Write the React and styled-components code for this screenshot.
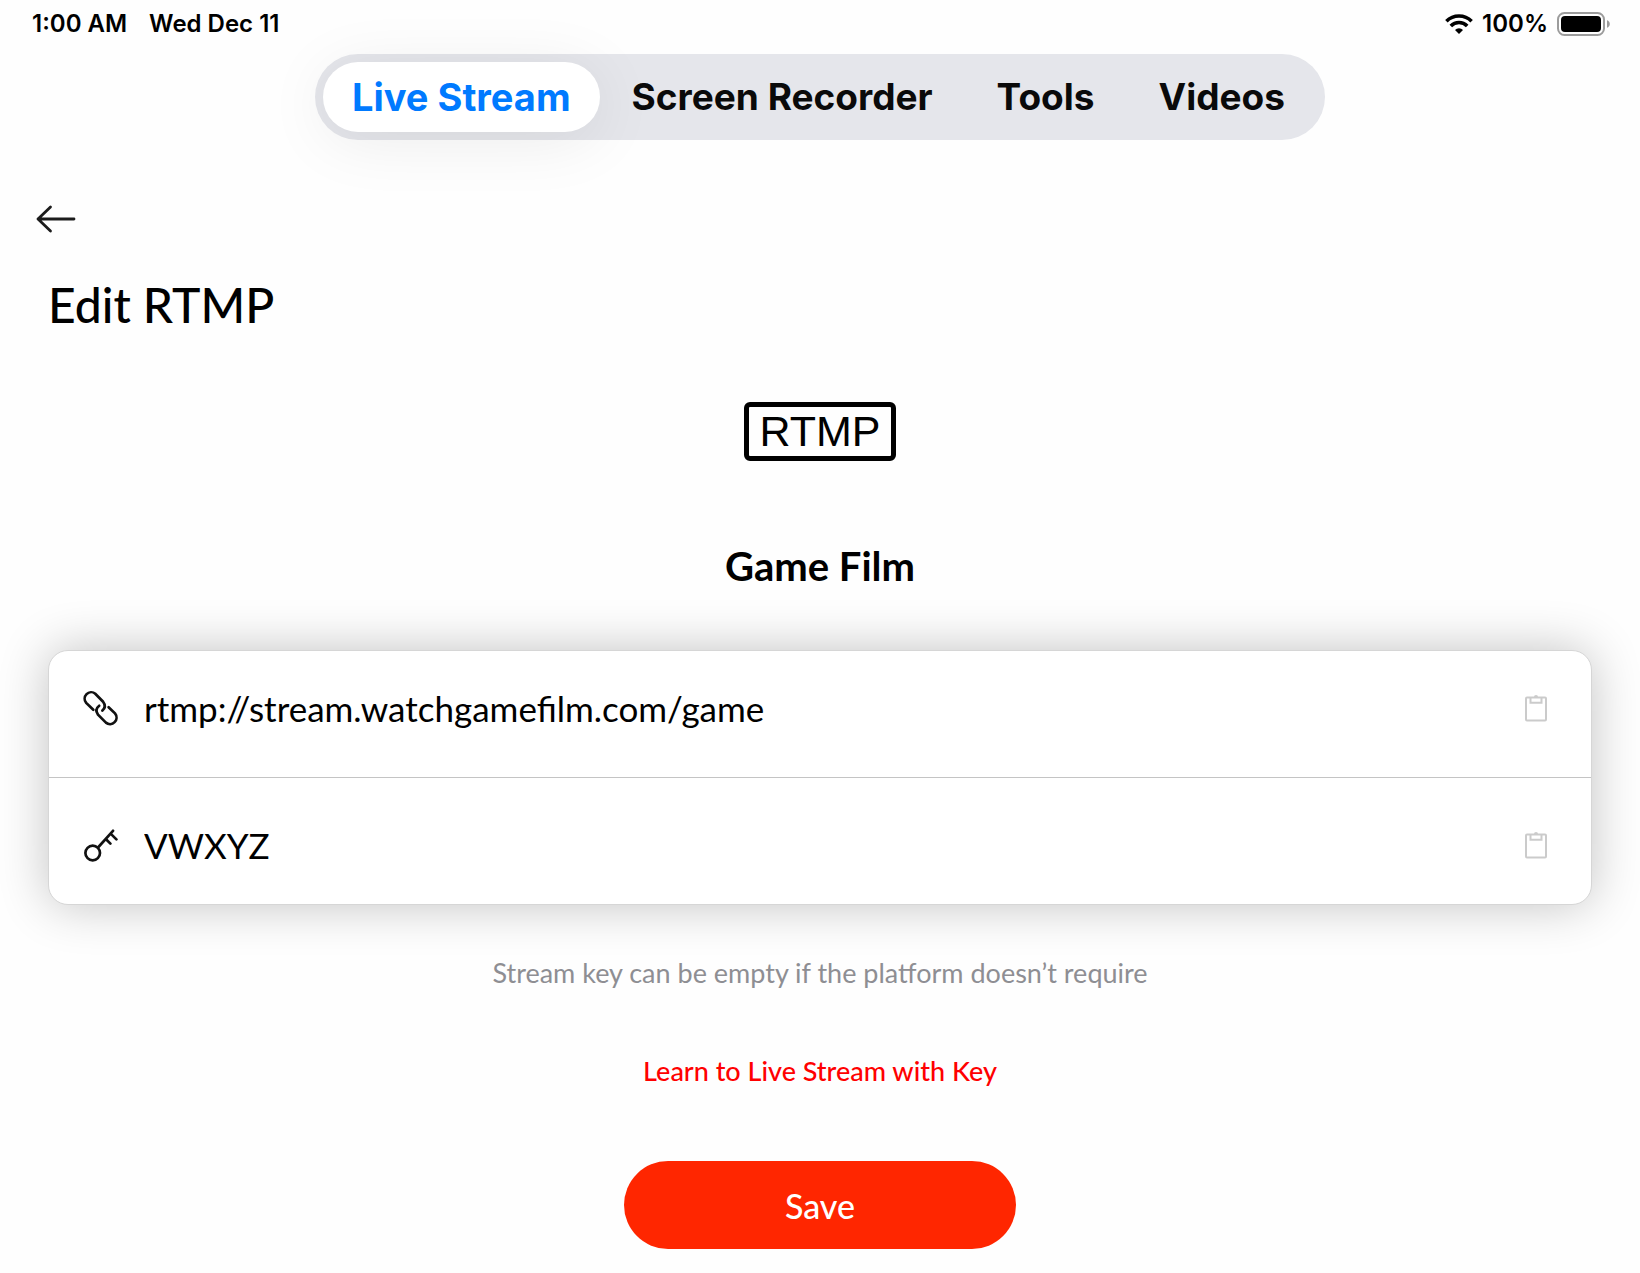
import React, { useState } from 'react'
import { styled, createGlobalStyle } from 'styled-components'

const GlobalStyle = createGlobalStyle`
* {
    box-sizing: border-box;
}
body {
    margin: 0;
    background: #fefefe;
    color: #000;
    font-family: Lato, "Open Sans", sans-serif;
}
h1, h2, p {
    margin: 0;
}
button, input {
    font-family: inherit;
    border: none;
    background: none;
    padding: 0;
}
`

const tabs = ['Live Stream', 'Screen Recorder', 'Tools', 'Videos']

function WifiIcon() {
    return (
        <svg width="28" height="20" viewBox="0 0 28 20" fill="none" stroke="#000" strokeWidth="3.600">
            <path d="M1.400 7.200a18 18 0 0 1 25.200 0" />
            <path d="M5.800 11.900a11.500 11.500 0 0 1 16.400 0" />
            <path d="M14 20l-4-4.100a5.700 5.700 0 0 1 8 0z" fill="#000" stroke="none" />
        </svg>
    )
}

function BatteryIcon() {
    return (
        <svg width="53" height="24" viewBox="0 0 53 24">
            <rect x="1" y="1" width="46" height="22" rx="6.500" fill="none" stroke="#9c9c9c" strokeWidth="2" />
            <rect x="4" y="4" width="40" height="16" rx="4" fill="#000" />
            <path d="M50 8.200c1.800.6 2.800 2 2.800 3.800s-1 3.200-2.800 3.800z" fill="#9c9c9c" />
        </svg>
    )
}

function BackIcon() {
    return (
        <svg width="40" height="28" viewBox="0 0 40 28" fill="none" stroke="#1c1c1c" strokeWidth="2.800" strokeLinecap="round" strokeLinejoin="round">
            <path d="M38 14H2M14.500 2L2 14l12.500 12" />
        </svg>
    )
}

function LinkIcon() {
    return (
        <svg width="36" height="36" viewBox="0 0 36 36" fill="none" stroke="#111" strokeWidth="2.700" strokeLinecap="round">
            <path d="M11.300 19.800L4.200 12.900A6.500 6.500 0 0 1 13.300 3.700L21.100 11.700Q24.800 16.500 20.400 20.600" />
            <path d="M26.600 17.200L33 23.400A6.500 6.500 0 0 1 23.900 32.600L16 24.600Q12.300 19.600 17.200 15.800" />
        </svg>
    )
}

function KeyIcon() {
    return (
        <svg width="36" height="36" viewBox="0 0 36 36" fill="none" stroke="#111" strokeWidth="2.700" strokeLinecap="round">
            <circle cx="10.700" cy="26" r="7.300" />
            <path d="M16 20.500L31 3.800M28.600 6.600l5.800 5.800M23.800 12l4.600 4.600" />
        </svg>
    )
}

function ClipboardIcon() {
    return (
        <svg width="22" height="28" viewBox="0 0 22 28" fill="none" stroke="#cbcbcb" strokeWidth="2">
            <rect x="1" y="3.500" width="20" height="23" rx="1" />
            <path d="M5.500 3.500v5.300h11V3.500" />
            <path d="M9 3a2 2 0 0 1 4 0z" fill="#cbcbcb" stroke="none" />
        </svg>
    )
}

function App() {
    const [active, setActive] = useState('Live Stream')
    const [url, setUrl] = useState('rtmp://stream.watchgamefilm.com/game')
    const [streamKey, setStreamKey] = useState('VWXYZ')

    return (
        <Page>
            <GlobalStyle />
            <StatusBar>
                <StatusGroup $gap="22px">
                    <span>1:00 AM</span>
                    <span>Wed Dec 11</span>
                </StatusGroup>
                <StatusGroup $gap="9px">
                    <WifiIcon />
                    <span>100%</span>
                    <BatteryIcon />
                </StatusGroup>
            </StatusBar>

            <TabBar>
                {tabs.map((tab) => (
                    <Tab key={tab} $active={tab === active} onClick={() => setActive(tab)}>{tab}</Tab>
                ))}
            </TabBar>

            <BackButton aria-label="Back"><BackIcon /></BackButton>

            <Content>
                <Title>Edit RTMP</Title>
                <Logo>RTMP</Logo>
                <Name>Game Film</Name>

                <Card>
                    <Row>
                        <label htmlFor="url" aria-label="Server URL"><LinkIcon /></label>
                        <Field id="url" value={url} onChange={(e) => setUrl(e.target.value)} />
                        <PasteButton aria-label="Paste URL"><ClipboardIcon /></PasteButton>
                    </Row>
                    <Row>
                        <label htmlFor="key" aria-label="Stream key"><KeyIcon /></label>
                        <Field id="key" value={streamKey} onChange={(e) => setStreamKey(e.target.value)} />
                        <PasteButton aria-label="Paste key"><ClipboardIcon /></PasteButton>
                    </Row>
                </Card>

                <Hint>Stream key can be empty if the platform doesn’t require</Hint>
                <LearnLink href="#learn">Learn to Live Stream with Key</LearnLink>
                <SaveButton>Save</SaveButton>
            </Content>
        </Page>
    )
}

const Page = styled.div`
    display: flex;
    flex-direction: column;
    padding-bottom: 23px;
`

const StatusBar = styled.header`
    display: flex;
    justify-content: space-between;
    height: 54px;
    padding: 10px 30px 0 32px;
    font: 600 24px/28px Inter, sans-serif;
`

const StatusGroup = styled.div`
    display: flex;
    align-items: center;
    height: 28px;
    gap: ${(props) => props.$gap};
`

const TabBar = styled.nav`
    display: flex;
    align-self: center;
    padding: 8px;
    border-radius: 999px;
    background: #e5e6eb;
`

const Tab = styled.button`
    height: 70px;
    padding: 0 ${(props) => (props.$active ? 29 : 32)}px;
    border-radius: 999px;
    font: 700 ${(props) => (props.$active ? 38 : 37)}px/44px Inter, sans-serif;
    color: ${(props) => (props.$active ? '#007aff' : '#0a0a0a')};
    background: ${(props) => (props.$active ? '#fff' : 'transparent')};
    box-shadow: ${(props) => (props.$active ? '0 8px 64px rgba(0, 0, 0, 0.08)' : 'none')};
    cursor: pointer;
`

const BackButton = styled.button`
    display: flex;
    align-items: center;
    align-self: flex-start;
    height: 40px;
    margin: 59px 0 0 36px;
    cursor: pointer;
`

const Content = styled.main`
    display: flex;
    flex-direction: column;
    align-items: center;
    padding: 36px 48px 0;
`

const Title = styled.h1`
    align-self: flex-start;
    font-size: 48px;
    line-height: 60px;
    font-weight: 500;
`

const Logo = styled.div`
    margin-top: 67px;
    padding: 0 10px;
    border: 5px solid #000;
    border-radius: 6px;
    font: 400 43px/49px "Liberation Sans", sans-serif;
`

const Name = styled.h2`
    margin-top: 81px;
    font-size: 40px;
    line-height: 48px;
    font-weight: 700;
`

const Card = styled.section`
    align-self: stretch;
    margin-top: 60px;
    border: 1px solid #d6d6d6;
    border-radius: 20px;
    background: #fff;
    box-shadow: 0 0 50px rgba(0, 0, 0, 0.24);
`

const Row = styled.div`
    display: flex;
    align-items: center;
    height: 126px;
    padding: 0 44px 12px 33px;

    & + & {
        height: 127px;
        padding: 8px 44px 0 33px;
        border-top: 1px solid #c4c4c4;
    }
    svg {
        display: block;
    }
`

const Field = styled.input`
    flex: 1;
    min-width: 0;
    margin: 0 24px 0 26px;
    height: 48px;
    color: #000;
    font-size: 35px;
    outline: none;
`

const PasteButton = styled.button`
    cursor: pointer;
`

const Hint = styled.p`
    margin-top: 52px;
    color: #8e8e93;
    font-size: 27px;
    line-height: 32px;
`

const LearnLink = styled.a`
    margin-top: 66px;
    color: #f00;
    font-size: 27px;
    line-height: 32px;
    font-weight: 500;
    text-decoration: none;
`

const SaveButton = styled.button`
    width: 392px;
    height: 88px;
    margin-top: 74px;
    border-radius: 999px;
    background: #ff2600;
    color: #fff;
    font-size: 34px;
    font-weight: 500;
    cursor: pointer;
`

export default App
